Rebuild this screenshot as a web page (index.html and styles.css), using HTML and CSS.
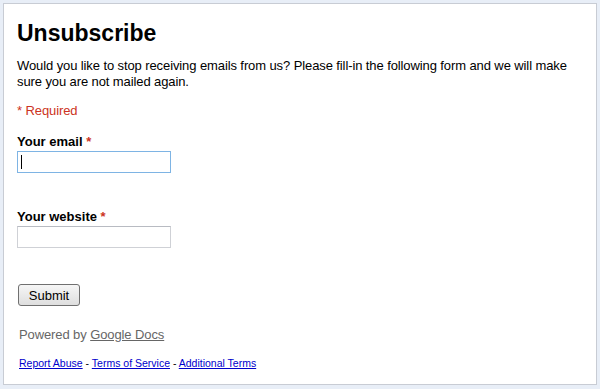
FILE: index.html
```html
<!DOCTYPE html>
<html lang="en">
<head>
    <meta charset="UTF-8">
    <title>Unsubscribe</title>
    <link rel="stylesheet" href="styles.css">
</head>
<body>

<div class="form-box">
    <h1 class="title">Unsubscribe</h1>
    <p class="desc">Would you like to stop receiving emails from us? Please fill-in the following form and we will make sure you are not mailed again.</p>
    <p class="required-note">* Required</p>

    <div class="field">
        <label class="field-label" for="email">Your email <span class="req">*</span></label>
        <div class="input-wrap">
            <input class="field-input focused" type="text" id="email">
            <span class="caret"></span>
        </div>
    </div>

    <div class="field">
        <label class="field-label" for="website">Your website <span class="req">*</span></label>
        <input class="field-input" type="text" id="website">
    </div>

    <button class="submit-btn" type="button">Submit</button>

    <p class="powered">Powered by <a href="#">Google Docs</a></p>

    <p class="footer-links">
        <a href="#">Report Abuse</a> - <a href="#">Terms of Service</a> - <a href="#">Additional Terms</a>
    </p>
</div>

</body>
</html>
```

FILE: styles.css
```css
body {
    margin: 0;
    padding: 3px;
    background-color: #e8eef7;
    font-family: "Liberation Sans", Arial, sans-serif;
    color: #000;
}

.form-box {
    background-color: #fff;
    border: 1px solid #c8ccd4;
    padding: 15px 16px 14px 13px;
    height: 351px;
}

.title {
    margin: 0;
    font-size: 23px;
    line-height: 28px;
    font-weight: bold;
}

.desc {
    margin: 11px 0 0;
    font-size: 13px;
    line-height: 16px;
    letter-spacing: -0.1px;
}

.required-note {
    margin: 13px 0 0;
    font-size: 13px;
    line-height: 15px;
    letter-spacing: -0.1px;
    color: #cc3322;
}

.field {
    margin-top: 16px;
}

.field + .field {
    margin-top: 36px;
}

.field-label {
    display: block;
    font-size: 13px;
    font-weight: bold;
    line-height: 15px;
    margin-bottom: 2px;
}

.req {
    color: #cc3322;
}

.input-wrap {
    position: relative;
    width: 154px;
}

.caret {
    position: absolute;
    left: 4px;
    top: 4px;
    width: 1px;
    height: 14px;
    background: #000;
}

.field-input {
    display: block;
    box-sizing: border-box;
    width: 154px;
    height: 22px;
    margin: 0;
    border: 1px solid #cfd1d6;
    border-top-color: #b8bbc2;
    background: #fff;
    font-size: 13px;
}

.field-input.focused {
    border-color: #7eb4e4;
}

.submit-btn {
    display: block;
    margin: 36px 0 0 1px;
    box-sizing: border-box;
    width: 62px;
    height: 22px;
    padding: 0;
    font-family: "Liberation Sans", Arial, sans-serif;
    font-size: 13px;
    color: #000;
    border: 1px solid #707070;
    border-radius: 3px;
    background: linear-gradient(#f6f6f6, #dedede);
}

.powered {
    margin: 21px 0 0 2px;
    font-size: 13px;
    line-height: 15px;
    letter-spacing: -0.1px;
    color: #666;
}

.powered a {
    color: #666;
}

.footer-links {
    margin: 15px 0 0 2px;
    font-size: 10.5px;
    line-height: 12px;
}

.footer-links a {
    color: #0000cc;
}
```
